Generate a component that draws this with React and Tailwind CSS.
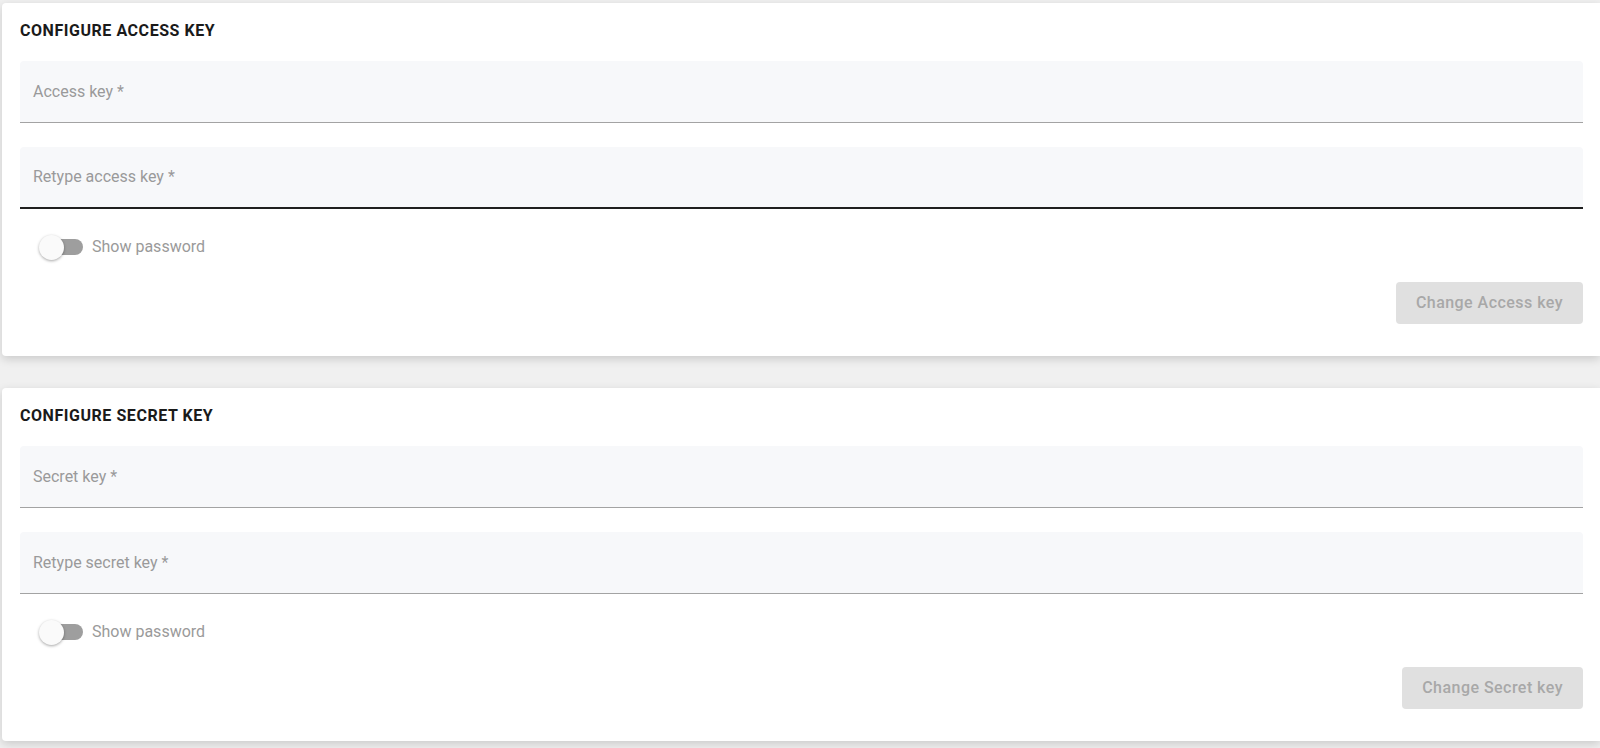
import { useState } from 'react'

function Field({ label, focused }) {
  return (
    <div
      className={`h-[62px] rounded-t-[4px] bg-[#f7f8fa] flex items-center px-[13px] ${
        focused ? 'border-b-2 border-[#1f1f1f]' : 'border-b border-[#a3a3a3]'
      }`}
    >
      <span className="text-[16px] text-[#9a9a9a] leading-6">{label}</span>
    </div>
  )
}

function Toggle() {
  const [on, setOn] = useState(false)
  return (
    <button onClick={() => setOn(!on)} className="flex items-center gap-[9px] h-10 pl-[19px]">
      <span className="relative w-[44px] h-[22px] flex items-center">
        <span className="absolute left-[3px] right-0 h-[16px] rounded-full bg-[#9e9e9e]" />
        <span className="absolute left-0 w-[25px] h-[25px] rounded-full bg-[#fafafa] shadow-[0_1px_3px_rgba(0,0,0,0.35)]" />
      </span>
      <span className="text-[16px] text-[#9a9a9a] leading-6">Show password</span>
    </button>
  )
}

function KeyCard({ title, first, second, action }) {
  return (
    <section className="bg-white shadow-[0_3px_10px_rgba(0,0,0,0.16)] rounded-l-[4px] pl-[18px] pr-[17px] pt-4 pb-[32px]">
      <h2 className="text-[16px] leading-6 font-bold text-[#1a1a1a] tracking-[0.55px]">{title}</h2>
      <div className="mt-[18px] flex flex-col gap-6">
        <Field label={first} />
        <Field label={second} focused={title.includes('ACCESS')} />
      </div>
      <div className="mt-[18px]">
        <Toggle />
      </div>
      <div className="flex justify-end mt-[15px]">
        <button
          disabled
          className="h-[42px] px-5 rounded-[4px] bg-[#e0e0e0] text-[16px] font-medium tracking-[0.46px] text-[#a8a8a8]"
        >
          {action}
        </button>
      </div>
    </section>
  )
}

export default function App() {
  return (
    <div
      className="min-h-[748px] bg-[#f0f0f0] pt-[3px] pl-[2px] flex flex-col gap-8"
      style={{ fontFamily: 'Roboto, "Liberation Sans", sans-serif' }}
    >
      <KeyCard
        title="CONFIGURE ACCESS KEY"
        first="Access key *"
        second="Retype access key *"
        action="Change Access key"
      />
      <KeyCard
        title="CONFIGURE SECRET KEY"
        first="Secret key *"
        second="Retype secret key *"
        action="Change Secret key"
      />
    </div>
  )
}
